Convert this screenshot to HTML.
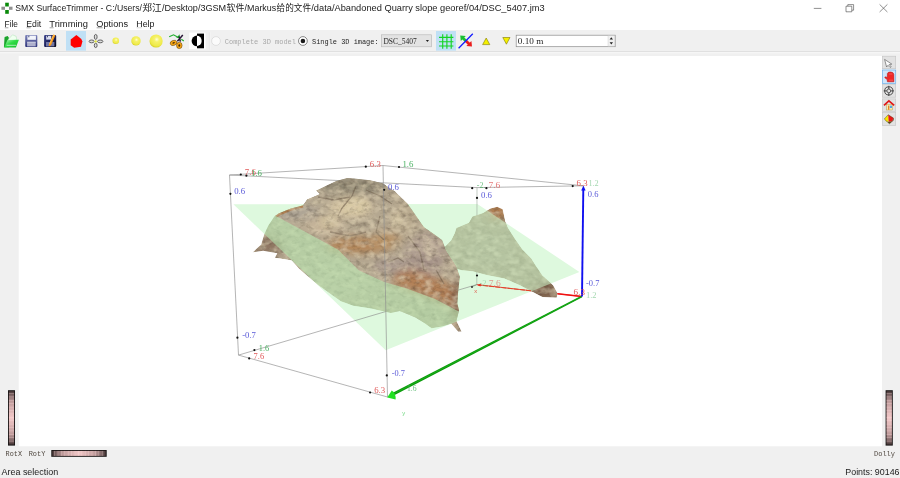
<!DOCTYPE html>
<html><head><meta charset="utf-8"><title>SMX SurfaceTrimmer</title>
<style>
html,body{margin:0;padding:0;background:#f0f0f0;}
body{width:900px;height:478px;overflow:hidden;position:relative;}
svg{position:absolute;left:0;top:0;display:block;will-change:transform}
text{white-space:pre}
.s{font-family:"Liberation Sans","Noto Sans CJK SC",sans-serif}
.m{font-family:"Liberation Mono","Noto Sans CJK SC",monospace}
.d{font-family:"Liberation Serif",serif}
</style></head><body>
<svg width="900" height="478" viewBox="0 0 900 478">
<defs>
<filter id="rk" x="0" y="0" width="100%" height="100%">
 <feTurbulence type="fractalNoise" baseFrequency="0.16 0.22" numOctaves="3" seed="7" result="n"/>
 <feColorMatrix in="n" type="matrix" values="0 0 0 0 0  0 0 0 0 0  0 0 0 0 0  1.2 0 0 0 -0.56" result="a"/>
 <feFlood flood-color="#4a3828" result="c"/>
 <feComposite in="c" in2="a" operator="in" result="d"/>
 <feTurbulence type="fractalNoise" baseFrequency="0.12 0.17" numOctaves="2" seed="23" result="n2"/>
 <feColorMatrix in="n2" type="matrix" values="0 0 0 0 0  0 0 0 0 0  0 0 0 0 0  0 1.3 0 0 -0.56" result="a2"/>
 <feFlood flood-color="#e4d6b8" result="c2"/>
 <feComposite in="c2" in2="a2" operator="in" result="l"/>
 <feMerge result="m"><feMergeNode in="SourceGraphic"/><feMergeNode in="l"/><feMergeNode in="d"/></feMerge>
 <feComposite in="m" in2="SourceGraphic" operator="in"/>
</filter>
<filter id="b2"><feGaussianBlur stdDeviation="4"/></filter>
<filter id="b0"><feGaussianBlur stdDeviation="0.7"/></filter>
<filter id="b1"><feGaussianBlur stdDeviation="2"/></filter>
<clipPath id="cr1"><polygon points="347.1,178.0 354.2,178.5 370.2,180.3 382.7,183.3 395.1,191.3 407.6,203.8 416.4,216.2 424.0,227.0 434.0,234.0 442.2,240.0 446.0,250.0 451.1,257.8 456.4,266.0 460.0,276.7 458.2,290.9 457.3,303.3 459.1,310.4 456.4,321.1 461.8,331.8 458.2,331.8 451.1,323.8 442.2,326.4 431.6,328.2 424.4,322.9 415.6,317.6 403.0,312.2 399.6,311.1 390.7,312.9 371.1,308.4 353.3,305.8 340.9,301.3 317.8,284.4 298.7,268.4 291.6,260.4 274.7,257.8 277.3,253.3 263.1,250.7 252.4,252.4 261.3,244.4 264.0,234.7 268.0,226.0 274.2,216.6 278.7,213.6 290.2,208.8 302.7,205.6 307.1,199.3 319.6,194.0 316.0,190.4 325.8,186.0 336.4,181.0"/></clipPath>
<clipPath id="cr2"><polygon points="497.3,206.7 502.7,209.3 505.3,220.9 508.0,228.0 515.0,239.0 522.2,249.3 531.1,258.2 536.0,266.0 542.4,275.6 551.3,283.6 553.1,285.3 557.6,293.3 556.7,297.8 542.4,296.9 531.8,291.6 520.4,285.6 504.4,278.4 486.7,274.9 472.4,271.3 462.0,270.3 455.0,268.5 449.0,258.0 443.0,249.0 444.9,246.7 451.1,240.4 454.7,233.3 456.4,228.0 468.9,222.7 472.4,216.4 483.1,212.9 490.2,208.4"/></clipPath>
<clipPath id="cfront"><polygon points="270.0,216.5 275.0,215.5 300.0,229.0 338.2,249.8 358.7,270.2 383.6,281.8 406.7,288.5 435.0,299.0 458.2,311.3 470.0,313.0 470.0,170.0 270.0,170.0"/></clipPath>
<clipPath id="cplane"><polygon points="233.4,204.2 477.4,204.0 579.4,272.0 385.7,350.3"/></clipPath>
<linearGradient id="wv" x1="0" y1="0" x2="0" y2="1"><stop offset="0" stop-color="#3a2c2c"/><stop offset="0.05" stop-color="#6e5858"/><stop offset="0.2" stop-color="#c09c9c"/><stop offset="0.5" stop-color="#f2c8c8"/><stop offset="0.8" stop-color="#c09c9c"/><stop offset="0.95" stop-color="#6e5858"/><stop offset="1" stop-color="#3a2c2c"/></linearGradient>
<linearGradient id="wh" x1="0" y1="0" x2="1" y2="0"><stop offset="0" stop-color="#3a2c2c"/><stop offset="0.05" stop-color="#6e5858"/><stop offset="0.2" stop-color="#c09c9c"/><stop offset="0.5" stop-color="#f2c8c8"/><stop offset="0.8" stop-color="#c09c9c"/><stop offset="0.95" stop-color="#6e5858"/><stop offset="1" stop-color="#3a2c2c"/></linearGradient>
<linearGradient id="fg" x1="0" y1="0" x2="1" y2="1"><stop offset="0" stop-color="#b4f8bc"/><stop offset="0.45" stop-color="#30dc46"/><stop offset="1" stop-color="#12b828"/></linearGradient>
<linearGradient id="sg1" x1="0" y1="0" x2="0" y2="1"><stop offset="0" stop-color="#8086bc"/><stop offset="1" stop-color="#2a3078"/></linearGradient>
<linearGradient id="sg2" x1="0" y1="0" x2="1" y2="1"><stop offset="0" stop-color="#3c448c"/><stop offset="0.6" stop-color="#161a50"/><stop offset="1" stop-color="#04040c"/></linearGradient>
<radialGradient id="ys" cx="0.55" cy="0.38" r="0.62"><stop offset="0" stop-color="#ffffd8"/><stop offset="0.3" stop-color="#f6f26a"/><stop offset="0.8" stop-color="#eeea48"/><stop offset="1" stop-color="#d6d024"/></radialGradient>
</defs>

<rect x="0" y="0" width="900" height="30" fill="#ffffff"/>
<rect x="0" y="30" width="900" height="448" fill="#f0f0f0"/>
<rect x="0" y="51" width="900" height="1.2" fill="#e0e0e0"/>
<rect x="0" y="52.2" width="900" height="1" fill="#f8f8f8"/>
<rect x="18.7" y="56" width="863.3" height="390.3" fill="#ffffff"/>
<g class="s">
<rect x="5.2" y="2.7" width="3.6" height="3.8" fill="#0a8a0a"/><rect x="5.2" y="10" width="3.6" height="3.8" fill="#0a8a0a"/>
<rect x="1.4" y="6.7" width="3.6" height="3.1" fill="#909090"/><rect x="9" y="6.7" width="3.5" height="3.1" fill="#909090"/>
<text y="11.1" font-size="8.7" fill="#1a1a1a"><tspan x="15.2" textLength="126.8" lengthAdjust="spacingAndGlyphs">SMX SurfaceTrimmer - C:/Users/</tspan><tspan x="142.3" textLength="19.5" lengthAdjust="spacingAndGlyphs">郑江</tspan><tspan x="162" textLength="64.2" lengthAdjust="spacingAndGlyphs">/Desktop/3GSM</tspan><tspan x="226.6" textLength="17.8" lengthAdjust="spacingAndGlyphs">软件</tspan><tspan x="244.6" textLength="31.6" lengthAdjust="spacingAndGlyphs">/Markus</tspan><tspan x="276.5" textLength="34.5" lengthAdjust="spacingAndGlyphs">给的文件</tspan><tspan x="311.3" textLength="233.3" lengthAdjust="spacingAndGlyphs">/data/Abandoned Quarry slope georef/04/DSC_5407.jm3</tspan></text>
<path d="M813.8 8.4h7.6" stroke="#444" stroke-width="0.6" fill="none"/>
<path d="M846 6.2h5.8v5.6h-5.8z M847.8 6.2v-1.6h5.8v5.6h-1.8" stroke="#444" stroke-width="0.6" fill="none"/>
<path d="M879.6 4.4l7.8 7.6M887.4 4.4l-7.8 7.6" stroke="#444" stroke-width="0.6" fill="none"/>
<text x="4.6" y="26.9" font-size="9.6" fill="#1a1a1a" textLength="13.4" lengthAdjust="spacingAndGlyphs">File</text>
<text x="26.3" y="26.9" font-size="9.6" fill="#1a1a1a" textLength="15" lengthAdjust="spacingAndGlyphs">Edit</text>
<text x="49.3" y="26.9" font-size="9.6" fill="#1a1a1a" textLength="38.7" lengthAdjust="spacingAndGlyphs">Trimming</text>
<text x="96.3" y="26.9" font-size="9.6" fill="#1a1a1a" textLength="31.7" lengthAdjust="spacingAndGlyphs">Options</text>
<text x="136.3" y="26.9" font-size="9.6" fill="#1a1a1a" textLength="18.2" lengthAdjust="spacingAndGlyphs">Help</text>
<rect x="4.8" y="27.6" width="3.6" height="0.55" fill="#333" opacity="0.8"/>
<rect x="26.5" y="27.6" width="4.2" height="0.55" fill="#333" opacity="0.8"/>
<rect x="49.6" y="27.6" width="4" height="0.55" fill="#333" opacity="0.8"/>
<rect x="96.6" y="27.6" width="6" height="0.55" fill="#333" opacity="0.8"/>
<rect x="136.6" y="27.6" width="5.2" height="0.55" fill="#333" opacity="0.35"/>
<text x="1.5" y="474.8" font-size="9.3" fill="#1a1a1a" textLength="56.7" lengthAdjust="spacingAndGlyphs">Area selection</text>
<text x="845.3" y="474.8" font-size="9.3" fill="#1a1a1a" textLength="54.2" lengthAdjust="spacingAndGlyphs">Points: 90146</text>
</g>
<g>
<path d="M3.9 47.2 L4.6 36.9 L7.6 36 L8.8 37.6 L8.8 47.2 Z" fill="#1aa42c"/>
<path d="M8.2 39.4 L12.6 34.8 L16.2 36.4 L16.8 40 L8.2 41.6 Z" fill="#f0fff0" stroke="#9cdca4" stroke-width="0.4"/>
<path d="M4.1 47.4 L7.5 39.9 L18.9 39.7 L15.9 47.4 Z" fill="url(#fg)"/>
<path d="M6.6 45.3 L16.2 45.3" stroke="#eafff0" stroke-width="0.8" opacity="0.85"/>
<rect x="25.2" y="35" width="12.1" height="12.1" rx="1" fill="url(#sg1)"/>
<rect x="27.4" y="35.7" width="8.5" height="4.1" fill="#f2f4fb"/><rect x="28.4" y="35.7" width="0.9" height="1.6" fill="#30386a"/><rect x="27.1" y="41.8" width="8.6" height="4.6" fill="#aeb0cc"/><rect x="27.1" y="41.8" width="8.6" height="0.8" fill="#d0d2e4"/>
<rect x="44.1" y="35" width="12.1" height="12.1" rx="1" fill="url(#sg2)"/>
<rect x="46.2" y="35.8" width="5" height="3.8" fill="#dcdff2"/><rect x="47" y="35.8" width="0.8" height="1.5" fill="#20264a"/><rect x="46" y="42" width="8.4" height="4.4" fill="#7076a6"/>
<path d="M48.9 44.6 L53.2 34.4 L55.4 35.3 L50.9 45.4 L48.7 46.2 Z" fill="#f79a1c"/><path d="M49.6 44 L53.6 34.8" stroke="#ffd070" stroke-width="0.7"/>
<rect x="66" y="31" width="20" height="19.7" fill="#c0e0f5"/>
<path d="M76.4 35 L81.3 38.9 L82.4 41.4 L81 46.7 L74.2 47.8 L70.7 45.3 L70.7 39.6 Z" fill="#ff0000"/>
<g fill="#dcdcdc" stroke="#5c5c5c" stroke-width="0.95"><ellipse cx="95.7" cy="36.9" rx="1.4" ry="2.5"/><ellipse cx="95.7" cy="45.4" rx="1.4" ry="2.2"/><ellipse cx="91.6" cy="41.4" rx="2.5" ry="1.4"/><ellipse cx="100.2" cy="41.4" rx="2.7" ry="1.4"/></g><circle cx="95.7" cy="41.4" r="1.2" fill="#dce040"/>
<circle cx="115.8" cy="40.7" r="3.3" fill="url(#ys)"/><circle cx="136" cy="40.9" r="4.7" fill="url(#ys)"/><circle cx="156.1" cy="41" r="6.6" fill="url(#ys)"/>
<path d="M169.2 36.8 L173.5 34.8 L177.6 37" stroke="#22b030" stroke-width="1.2" fill="none"/><path d="M176.2 37.8 L179.8 34.2 L179.6 38.2Z" fill="#22b030"/>
<path d="M181.3 39.2 L183.8 41" stroke="#22b030" stroke-width="1.2"/>
<path d="M182.8 35 L177.4 41.2 M179 36.4 L180.4 41.6" stroke="#2a1838" stroke-width="1.5" fill="none"/>
<g fill="#f6a616" stroke="#5a3808" stroke-width="0.5"><ellipse cx="173.6" cy="42.9" rx="3.5" ry="2.5" transform="rotate(-18 173.6 42.9)"/><ellipse cx="179.3" cy="45.4" rx="2.8" ry="3.2"/></g>
<g fill="#3a2408"><ellipse cx="173.6" cy="42.9" rx="1.3" ry="0.7" transform="rotate(-18 173.6 42.9)"/><ellipse cx="179.3" cy="45.5" rx="0.9" ry="1.3"/></g>
<rect x="189.2" y="32.6" width="16.3" height="16.6" fill="#ffffff"/><rect x="197" y="33.6" width="7" height="14.7" fill="#000"/>
<path d="M197 35.6 A5.4 5.3 0 0 0 197 46.2 Z" fill="#000"/><path d="M197 35.8 A4.7 5.1 0 0 1 197 46 Z" fill="#fff"/>
<rect x="208.9" y="32.5" width="0.8" height="17" fill="#dcdcdc"/><rect x="209.7" y="32.5" width="0.6" height="17" fill="#fafafa"/>
<circle cx="216" cy="41" r="4.4" fill="#fbfbfb" stroke="#d0d0d0" stroke-width="0.6"/>
<circle cx="302.9" cy="41" r="4.4" fill="#ffffff" stroke="#555" stroke-width="0.7"/><circle cx="302.9" cy="41" r="2.3" fill="#1a1a1a"/>
<g class="m" font-size="8">
<text x="224.8" y="43.8" fill="#a8a8a8" textLength="71.2" lengthAdjust="spacingAndGlyphs">Complete 3D model</text>
<text x="312" y="43.8" fill="#262626" textLength="66.6" lengthAdjust="spacingAndGlyphs">Single 3D image:</text>
<rect x="381.4" y="34.8" width="50.2" height="12" fill="#e3e3e3" stroke="#b4b4b4" stroke-width="0.6"/>
<text class="d" x="383.4" y="43.8" font-size="8.4" fill="#262626" textLength="33.3" lengthAdjust="spacingAndGlyphs">DSC_5407</text>
<path d="M425.8 40 h3.2 l-1.6 2 z" fill="#222"/>
<rect x="516.2" y="35.2" width="99" height="11.5" fill="#ffffff" stroke="#8a8a8a" stroke-width="0.7"/>
<text class="d" x="517.8" y="43.9" font-size="8.4" fill="#262626" textLength="25.5" lengthAdjust="spacingAndGlyphs">0.10 m</text>
<rect x="608" y="35.8" width="6.6" height="10.3" fill="#f0f0f0" stroke="#c8c8c8" stroke-width="0.4"/>
<path d="M609.6 39.4 h3.4 l-1.7 -2.2z M609.6 42.2 h3.4 l-1.7 2.2z" fill="#222"/>
</g>
<rect x="436" y="31" width="20" height="19.7" fill="#c0e0f5"/>
<path d="M442.7 34.3V48.7M446.9 34.3V48.7M451.2 34.3V48.7M439 37.4H453.4M439 41.7H453.4M439 46H453.4" stroke="#14d424" stroke-width="1.15" fill="none"/>
<path d="M466.2 41.2 L462.6 37.8" stroke="#18c030" stroke-width="2.8"/><path d="M460.2 35.4 l5.6 0.6 l-5 5z" fill="#18c030"/>
<path d="M465.8 40.8 L469.4 44.2" stroke="#ea1c1c" stroke-width="2.8"/><path d="M472 46.6 l-5.6 -0.6 l5 -5z" fill="#ea1c1c"/>
<path d="M458.6 48.2 L472.8 33.8" stroke="#1018ff" stroke-width="1.25"/>
<path d="M486.2 38 L489.8 44.6 L482.6 44.6 Z" fill="#f4f000" stroke="#807800" stroke-width="0.6"/>
<path d="M506.4 44.2 L510 37.5 L502.8 37.5 Z" fill="#f4f000" stroke="#807800" stroke-width="0.6"/>
</g>
<rect x="8" y="390.2" width="7" height="55.4" fill="#181414"/>
<rect x="8.9" y="391.0" width="5.2" height="53.8" fill="url(#wv)"/>
<rect x="8.9" y="393.2" width="5.2" height="0.6" fill="#ffe0e0" opacity="0.45"/>
<rect x="8.9" y="396.6" width="5.2" height="0.6" fill="#ffe0e0" opacity="0.45"/>
<rect x="8.9" y="400.0" width="5.2" height="0.6" fill="#ffe0e0" opacity="0.45"/>
<rect x="8.9" y="403.4" width="5.2" height="0.6" fill="#ffe0e0" opacity="0.45"/>
<rect x="8.9" y="406.8" width="5.2" height="0.6" fill="#ffe0e0" opacity="0.45"/>
<rect x="8.9" y="410.2" width="5.2" height="0.6" fill="#ffe0e0" opacity="0.45"/>
<rect x="8.9" y="413.6" width="5.2" height="0.6" fill="#ffe0e0" opacity="0.45"/>
<rect x="8.9" y="417.0" width="5.2" height="0.6" fill="#ffe0e0" opacity="0.45"/>
<rect x="8.9" y="420.4" width="5.2" height="0.6" fill="#ffe0e0" opacity="0.45"/>
<rect x="8.9" y="423.8" width="5.2" height="0.6" fill="#ffe0e0" opacity="0.45"/>
<rect x="8.9" y="427.2" width="5.2" height="0.6" fill="#ffe0e0" opacity="0.45"/>
<rect x="8.9" y="430.6" width="5.2" height="0.6" fill="#ffe0e0" opacity="0.45"/>
<rect x="8.9" y="434.0" width="5.2" height="0.6" fill="#ffe0e0" opacity="0.45"/>
<rect x="8.9" y="437.4" width="5.2" height="0.6" fill="#ffe0e0" opacity="0.45"/>
<rect x="8.9" y="440.8" width="5.2" height="0.6" fill="#ffe0e0" opacity="0.45"/>
<rect x="885.6" y="390.2" width="7.2" height="55.4" fill="#181414"/>
<rect x="886.5" y="391.0" width="5.4" height="53.8" fill="url(#wv)"/>
<rect x="886.5" y="393.2" width="5.4" height="0.6" fill="#ffe0e0" opacity="0.45"/>
<rect x="886.5" y="396.6" width="5.4" height="0.6" fill="#ffe0e0" opacity="0.45"/>
<rect x="886.5" y="400.0" width="5.4" height="0.6" fill="#ffe0e0" opacity="0.45"/>
<rect x="886.5" y="403.4" width="5.4" height="0.6" fill="#ffe0e0" opacity="0.45"/>
<rect x="886.5" y="406.8" width="5.4" height="0.6" fill="#ffe0e0" opacity="0.45"/>
<rect x="886.5" y="410.2" width="5.4" height="0.6" fill="#ffe0e0" opacity="0.45"/>
<rect x="886.5" y="413.6" width="5.4" height="0.6" fill="#ffe0e0" opacity="0.45"/>
<rect x="886.5" y="417.0" width="5.4" height="0.6" fill="#ffe0e0" opacity="0.45"/>
<rect x="886.5" y="420.4" width="5.4" height="0.6" fill="#ffe0e0" opacity="0.45"/>
<rect x="886.5" y="423.8" width="5.4" height="0.6" fill="#ffe0e0" opacity="0.45"/>
<rect x="886.5" y="427.2" width="5.4" height="0.6" fill="#ffe0e0" opacity="0.45"/>
<rect x="886.5" y="430.6" width="5.4" height="0.6" fill="#ffe0e0" opacity="0.45"/>
<rect x="886.5" y="434.0" width="5.4" height="0.6" fill="#ffe0e0" opacity="0.45"/>
<rect x="886.5" y="437.4" width="5.4" height="0.6" fill="#ffe0e0" opacity="0.45"/>
<rect x="886.5" y="440.8" width="5.4" height="0.6" fill="#ffe0e0" opacity="0.45"/>
<rect x="51.3" y="450" width="55.4" height="6.8" fill="#181414"/>
<rect x="52.099999999999994" y="450.9" width="53.8" height="5.0" fill="url(#wh)"/>
<rect x="54.3" y="450.9" width="0.6" height="5.0" fill="#ffe0e0" opacity="0.45"/>
<rect x="57.7" y="450.9" width="0.6" height="5.0" fill="#ffe0e0" opacity="0.45"/>
<rect x="61.1" y="450.9" width="0.6" height="5.0" fill="#ffe0e0" opacity="0.45"/>
<rect x="64.5" y="450.9" width="0.6" height="5.0" fill="#ffe0e0" opacity="0.45"/>
<rect x="67.9" y="450.9" width="0.6" height="5.0" fill="#ffe0e0" opacity="0.45"/>
<rect x="71.3" y="450.9" width="0.6" height="5.0" fill="#ffe0e0" opacity="0.45"/>
<rect x="74.7" y="450.9" width="0.6" height="5.0" fill="#ffe0e0" opacity="0.45"/>
<rect x="78.1" y="450.9" width="0.6" height="5.0" fill="#ffe0e0" opacity="0.45"/>
<rect x="81.5" y="450.9" width="0.6" height="5.0" fill="#ffe0e0" opacity="0.45"/>
<rect x="84.9" y="450.9" width="0.6" height="5.0" fill="#ffe0e0" opacity="0.45"/>
<rect x="88.3" y="450.9" width="0.6" height="5.0" fill="#ffe0e0" opacity="0.45"/>
<rect x="91.7" y="450.9" width="0.6" height="5.0" fill="#ffe0e0" opacity="0.45"/>
<rect x="95.1" y="450.9" width="0.6" height="5.0" fill="#ffe0e0" opacity="0.45"/>
<rect x="98.5" y="450.9" width="0.6" height="5.0" fill="#ffe0e0" opacity="0.45"/>
<rect x="101.9" y="450.9" width="0.6" height="5.0" fill="#ffe0e0" opacity="0.45"/>
<g class="m" font-size="7.2" fill="#504840">
<text x="5.6" y="456.2" textLength="16.4" lengthAdjust="spacingAndGlyphs">RotX</text>
<text x="28.7" y="456.2" textLength="16.6" lengthAdjust="spacingAndGlyphs">RotY</text>
<text x="874" y="456.2" textLength="21" lengthAdjust="spacingAndGlyphs">Dolly</text>
</g>
<rect x="882.5" y="56.2" width="13.2" height="12.5" fill="#e2e2e2" stroke="#c4c4c4" stroke-width="0.6"/>
<rect x="882.5" y="70" width="13.2" height="13.5" fill="#cfe6fa" stroke="#6cb0ea" stroke-width="0.7"/>
<rect x="882.5" y="84.6" width="13.2" height="12.6" fill="#e2e2e2" stroke="#c4c4c4" stroke-width="0.6"/>
<rect x="882.5" y="98.9" width="13.2" height="12.5" fill="#e2e2e2" stroke="#c4c4c4" stroke-width="0.6"/>
<rect x="882.5" y="112.6" width="13.2" height="13.0" fill="#e2e2e2" stroke="#c4c4c4" stroke-width="0.6"/>
<path d="M884.6 59.4 L891.8 64.1 L889.2 64.6 L891.2 66.8 L890 67.4 L888 65.3 L886.6 67 Z" fill="#fcfcfc" stroke="#505050" stroke-width="0.6" stroke-linejoin="round"/>
<path d="M887.4 81.8 L887.2 79.6 L884.8 77.8 L885.2 76.8 L887.3 77.4 L887.4 73.4 Q888 71.8 890.6 72 Q893.6 72.2 893.8 74.4 L893.9 81.8 Z" fill="#f02828" stroke="#b00808" stroke-width="0.5" stroke-linejoin="round"/><path d="M889 74 L892.4 74 M888.8 80.2 L893 80.2" stroke="#ff8080" stroke-width="0.5"/>
<circle cx="888.8" cy="90.9" r="4.1" fill="none" stroke="#2a2a2a" stroke-width="0.8"/><circle cx="888.8" cy="90.9" r="1.9" fill="none" stroke="#2a2a2a" stroke-width="0.7"/><path d="M888.8 85.8v3.2M888.8 92.8v3.2M883.7 90.9h3.2M890.7 90.9h3.2" stroke="#2a2a2a" stroke-width="0.8"/>
<rect x="886.6" y="104.4" width="6" height="5.6" fill="#f8ecb0" stroke="#b09030" stroke-width="0.4"/><rect x="888.1" y="105.6" width="1.2" height="4.2" fill="#e87818"/><rect x="889.8" y="105.6" width="2.2" height="2.4" fill="#50a8e8"/>
<path d="M884 105.3 L888.9 100.9 L894.2 105.3" fill="none" stroke="#e01818" stroke-width="1.7" stroke-linejoin="miter"/>
<path d="M884.3 119 L886.5 121.5 L888.7 121.6 L892.2 121.2 L893.5 118.1 L893.3 120.4 L889.4 123.8 Z" fill="#5a4a10"/>
<path d="M884.3 119 L888.2 114.7 L888.7 121.6 L886.5 121.5 Z" fill="#f8e800"/><path d="M888.2 114.7 L893.5 118.1 L892.2 121.2 L888.7 121.6 Z" fill="#e81818"/>
<path d="M884.3 119 L888.2 114.7 L893.5 118.1 L893.3 120.4 L889.4 123.8 Z" fill="none" stroke="#40300c" stroke-width="0.4"/>
<g id="scene">
<polygon points="233.4,204.2 477.4,204.0 579.4,272.0 385.7,350.3" fill="#def9de"/>
<line x1="238.5" y1="355.1" x2="476.8" y2="284.6" stroke="#8c8c8c" stroke-width="0.65" />
<line x1="476.8" y1="284.6" x2="477" y2="187.6" stroke="#9aa89a" stroke-width="0.6" />
<line x1="477" y1="187.6" x2="229.5" y2="175" stroke="#8c8c8c" stroke-width="0.65" />
<line x1="583.4" y1="185.8" x2="477" y2="187.6" stroke="#8c8c8c" stroke-width="0.65" />
<line x1="581.8" y1="296.5" x2="476.8" y2="284.6" stroke="#e02020" stroke-width="0.8" />
<g clip-path="url(#cr2)"><g filter="url(#rk)">
<polygon points="497.3,206.7 502.7,209.3 505.3,220.9 508.0,228.0 515.0,239.0 522.2,249.3 531.1,258.2 536.0,266.0 542.4,275.6 551.3,283.6 553.1,285.3 557.6,293.3 556.7,297.8 542.4,296.9 531.8,291.6 520.4,285.6 504.4,278.4 486.7,274.9 472.4,271.3 462.0,270.3 455.0,268.5 449.0,258.0 443.0,249.0 444.9,246.7 451.1,240.4 454.7,233.3 456.4,228.0 468.9,222.7 472.4,216.4 483.1,212.9 490.2,208.4" fill="#9a8a70"/>
<g filter="url(#b2)">
<ellipse cx="497" cy="212" rx="9" ry="7" fill="#b87c48"/>
<ellipse cx="545" cy="291" rx="14" ry="8" fill="#7a5c46"/>
<ellipse cx="490" cy="250" rx="26" ry="18" fill="#9c8e74"/>
</g></g></g>
<g clip-path="url(#cr1)"><g filter="url(#rk)">
<polygon points="347.1,178.0 354.2,178.5 370.2,180.3 382.7,183.3 395.1,191.3 407.6,203.8 416.4,216.2 424.0,227.0 434.0,234.0 442.2,240.0 446.0,250.0 451.1,257.8 456.4,266.0 460.0,276.7 458.2,290.9 457.3,303.3 459.1,310.4 456.4,321.1 461.8,331.8 458.2,331.8 451.1,323.8 442.2,326.4 431.6,328.2 424.4,322.9 415.6,317.6 403.0,312.2 399.6,311.1 390.7,312.9 371.1,308.4 353.3,305.8 340.9,301.3 317.8,284.4 298.7,268.4 291.6,260.4 274.7,257.8 277.3,253.3 263.1,250.7 252.4,252.4 261.3,244.4 264.0,234.7 268.0,226.0 274.2,216.6 278.7,213.6 290.2,208.8 302.7,205.6 307.1,199.3 319.6,194.0 316.0,190.4 325.8,186.0 336.4,181.0" fill="#b4a790"/>
<g filter="url(#b2)">
<ellipse cx="352" cy="186" rx="32" ry="8" fill="#8e8672"/>
<ellipse cx="298" cy="213" rx="22" ry="7" fill="#aea596"/>
<ellipse cx="350" cy="208" rx="22" ry="10" fill="#d5c5a3"/>
<ellipse cx="324" cy="226" rx="20" ry="8" fill="#c7b59a"/>
<ellipse cx="360" cy="245" rx="34" ry="8" fill="#b28456"/>
<ellipse cx="405" cy="220" rx="13" ry="20" fill="#b9aa90"/>
<ellipse cx="425" cy="256" rx="20" ry="22" fill="#a7958a"/>
<path d="M398 268 L420 272 L446 282 L460 296 L458 312 L436 300 L410 290 L392 284 Z" fill="#b28056"/>
<path d="M452 286 L461 280 L460 312 L463 333 L452 322 Z" fill="#826049"/>
<ellipse cx="386" cy="240" rx="14" ry="8" fill="#ba956b"/>
<ellipse cx="392" cy="266" rx="18" ry="7" fill="#a7978e"/>
<ellipse cx="268" cy="246" rx="16" ry="10" fill="#8e7662"/>
<ellipse cx="330" cy="280" rx="40" ry="18" fill="#b9ae96"/>
<ellipse cx="420" cy="315" rx="30" ry="10" fill="#b0a58c"/>
</g>
<g filter="url(#b1)" opacity="0.8">
<path d="M348 200 L362 196 L372 206 L360 214 L344 212 Z" fill="#d9caa5"/>
<path d="M318 218 L334 214 L340 224 L324 230 Z" fill="#cfbf9d"/>
<path d="M390 214 L400 212 L404 224 L392 228 Z" fill="#d1c3a3"/>
<path d="M418 240 L432 238 L440 252 L428 258 Z" fill="#c7b8a1"/>
</g>
<path d="M275.5 216.5 L279 214 L290.5 209.4 L303 206" fill="none" stroke="#b07a44" stroke-width="3" opacity="0.8" filter="url(#b0)"/>
<g fill="none" stroke="#6a5a48" stroke-width="1.3" opacity="0.5" filter="url(#b0)">
<path d="M356 186 L352 196 L342 208 L338 216"/><path d="M318 197 L334 200 L350 197"/><path d="M366 190 L380 196 L392 204"/><path d="M380 216 L376 232 L384 240"/><path d="M330 232 L350 236 L366 232"/><path d="M408 236 L420 252 L424 270"/><path d="M388 262 L398 258 L404 262"/><path d="M436 270 L444 284"/>
</g></g></g>
<g clip-path="url(#cplane)"><polygon points="497.3,206.7 502.7,209.3 505.3,220.9 508.0,228.0 515.0,239.0 522.2,249.3 531.1,258.2 536.0,266.0 542.4,275.6 551.3,283.6 553.1,285.3 557.6,293.3 556.7,297.8 542.4,296.9 531.8,291.6 520.4,285.6 504.4,278.4 486.7,274.9 472.4,271.3 462.0,270.3 455.0,268.5 449.0,258.0 443.0,249.0 444.9,246.7 451.1,240.4 454.7,233.3 456.4,228.0 468.9,222.7 472.4,216.4 483.1,212.9 490.2,208.4" fill="#c6e8be" fill-opacity="0.6"/><polygon points="347.1,178.0 354.2,178.5 370.2,180.3 382.7,183.3 395.1,191.3 407.6,203.8 416.4,216.2 424.0,227.0 434.0,234.0 442.2,240.0 446.0,250.0 451.1,257.8 456.4,266.0 460.0,276.7 458.2,290.9 457.3,303.3 459.1,310.4 456.4,321.1 461.8,331.8 458.2,331.8 451.1,323.8 442.2,326.4 431.6,328.2 424.4,322.9 415.6,317.6 403.0,312.2 399.6,311.1 390.7,312.9 371.1,308.4 353.3,305.8 340.9,301.3 317.8,284.4 298.7,268.4 291.6,260.4 274.7,257.8 277.3,253.3 263.1,250.7 252.4,252.4 261.3,244.4 264.0,234.7 268.0,226.0 274.2,216.6 278.7,213.6 290.2,208.8 302.7,205.6 307.1,199.3 319.6,194.0 316.0,190.4 325.8,186.0 336.4,181.0" fill="#b8e6b0" fill-opacity="0.6"/></g>
<g clip-path="url(#cfront)">
<g clip-path="url(#cr1)"><g filter="url(#rk)">
<polygon points="347.1,178.0 354.2,178.5 370.2,180.3 382.7,183.3 395.1,191.3 407.6,203.8 416.4,216.2 424.0,227.0 434.0,234.0 442.2,240.0 446.0,250.0 451.1,257.8 456.4,266.0 460.0,276.7 458.2,290.9 457.3,303.3 459.1,310.4 456.4,321.1 461.8,331.8 458.2,331.8 451.1,323.8 442.2,326.4 431.6,328.2 424.4,322.9 415.6,317.6 403.0,312.2 399.6,311.1 390.7,312.9 371.1,308.4 353.3,305.8 340.9,301.3 317.8,284.4 298.7,268.4 291.6,260.4 274.7,257.8 277.3,253.3 263.1,250.7 252.4,252.4 261.3,244.4 264.0,234.7 268.0,226.0 274.2,216.6 278.7,213.6 290.2,208.8 302.7,205.6 307.1,199.3 319.6,194.0 316.0,190.4 325.8,186.0 336.4,181.0" fill="#b4a790"/>
<g filter="url(#b2)">
<ellipse cx="352" cy="186" rx="32" ry="8" fill="#8e8672"/>
<ellipse cx="298" cy="213" rx="22" ry="7" fill="#aea596"/>
<ellipse cx="350" cy="208" rx="22" ry="10" fill="#d5c5a3"/>
<ellipse cx="324" cy="226" rx="20" ry="8" fill="#c7b59a"/>
<ellipse cx="360" cy="245" rx="34" ry="8" fill="#b28456"/>
<ellipse cx="405" cy="220" rx="13" ry="20" fill="#b9aa90"/>
<ellipse cx="425" cy="256" rx="20" ry="22" fill="#a7958a"/>
<path d="M398 268 L420 272 L446 282 L460 296 L458 312 L436 300 L410 290 L392 284 Z" fill="#b28056"/>
<path d="M452 286 L461 280 L460 312 L463 333 L452 322 Z" fill="#826049"/>
<ellipse cx="386" cy="240" rx="14" ry="8" fill="#ba956b"/>
<ellipse cx="392" cy="266" rx="18" ry="7" fill="#a7978e"/>
<ellipse cx="268" cy="246" rx="16" ry="10" fill="#8e7662"/>
<ellipse cx="330" cy="280" rx="40" ry="18" fill="#b9ae96"/>
<ellipse cx="420" cy="315" rx="30" ry="10" fill="#b0a58c"/>
</g>
<g filter="url(#b1)" opacity="0.8">
<path d="M348 200 L362 196 L372 206 L360 214 L344 212 Z" fill="#d9caa5"/>
<path d="M318 218 L334 214 L340 224 L324 230 Z" fill="#cfbf9d"/>
<path d="M390 214 L400 212 L404 224 L392 228 Z" fill="#d1c3a3"/>
<path d="M418 240 L432 238 L440 252 L428 258 Z" fill="#c7b8a1"/>
</g>
<path d="M275.5 216.5 L279 214 L290.5 209.4 L303 206" fill="none" stroke="#b07a44" stroke-width="3" opacity="0.8" filter="url(#b0)"/>
<g fill="none" stroke="#6a5a48" stroke-width="1.3" opacity="0.5" filter="url(#b0)">
<path d="M356 186 L352 196 L342 208 L338 216"/><path d="M318 197 L334 200 L350 197"/><path d="M366 190 L380 196 L392 204"/><path d="M380 216 L376 232 L384 240"/><path d="M330 232 L350 236 L366 232"/><path d="M408 236 L420 252 L424 270"/><path d="M388 262 L398 258 L404 262"/><path d="M436 270 L444 284"/>
</g></g></g>
</g>
<line x1="581.8" y1="296.5" x2="557.5" y2="293.8" stroke="#f01010" stroke-width="1.6" />
<line x1="531" y1="290.8" x2="478.5" y2="285" stroke="#e44428" stroke-width="1.0" stroke-dasharray="5 1.2"/>
<path d="M477.3 285.2 l3.6 -1.6 l-0.4 3z" fill="#e83020"/>
<line x1="476.8" y1="284.6" x2="471.7" y2="287" stroke="#6a8a6a" stroke-width="0.6" />
<circle cx="472" cy="287" r="0.9" fill="#222"/>
<line x1="229.5" y1="175" x2="383" y2="165.5" stroke="#8c8c8c" stroke-width="0.65" />
<line x1="383" y1="165.5" x2="583.4" y2="185.8" stroke="#8c8c8c" stroke-width="0.65" />
<line x1="229.5" y1="175" x2="238.5" y2="355.1" stroke="#8c8c8c" stroke-width="0.65" />
<line x1="238.5" y1="355.1" x2="387.5" y2="397" stroke="#8c8c8c" stroke-width="0.65" />
<line x1="383" y1="165.5" x2="387.5" y2="397" stroke="#8c8c8c" stroke-width="0.65" />
<polygon points="581.4,295.7 392.3,392.9 393.7,395.5 582.2,297.3" fill="#0a9a0a"/>
<polygon points="581.7,296.2 392.8,393.8 393.2,394.6 581.9,296.8" fill="#1cb01c"/>
<path d="M387.2 397.4 L391.8 390.4 Q396 393 395.6 399.4 Z" fill="#22e022"/>
<line x1="582" y1="296.5" x2="583.3" y2="189.5" stroke="#1010f0" stroke-width="1.9" />
<path d="M583.4 185.6 L581.2 190.4 L585.6 190.4 Z" fill="#1010f0"/>
<circle cx="240.8" cy="174.5" r="1.1" fill="#111"/>
<circle cx="246.4" cy="175.7" r="1.1" fill="#111"/>
<circle cx="230.4" cy="193.8" r="1.1" fill="#111"/>
<circle cx="365.8" cy="166.7" r="1.1" fill="#111"/>
<circle cx="399" cy="167" r="1.1" fill="#111"/>
<circle cx="384.2" cy="189.8" r="1.1" fill="#111"/>
<circle cx="472.2" cy="188.2" r="1.1" fill="#111"/>
<circle cx="486.4" cy="188.2" r="1.1" fill="#111"/>
<circle cx="477" cy="197.9" r="1.1" fill="#111"/>
<circle cx="572.7" cy="186.1" r="1.1" fill="#111"/>
<circle cx="237.4" cy="337.7" r="1.1" fill="#111"/>
<circle cx="254.4" cy="350.1" r="1.1" fill="#111"/>
<circle cx="249.2" cy="358.4" r="1.1" fill="#111"/>
<circle cx="386.8" cy="375.4" r="1.1" fill="#111"/>
<circle cx="370.1" cy="392.5" r="1.1" fill="#111"/>
<circle cx="477" cy="275.5" r="1.1" fill="#111"/>
<g class="d" font-size="7.6">
<text x="244.8" y="174.6" fill="#e05858" textLength="11.0" lengthAdjust="spacingAndGlyphs" opacity="1">7.6</text>
<text x="251" y="176" fill="#48b060" textLength="11.0" lengthAdjust="spacingAndGlyphs" opacity="1">1.6</text>
<text x="234.2" y="194.1" fill="#5858d8" textLength="11.0" lengthAdjust="spacingAndGlyphs" opacity="1">0.6</text>
<text x="369.8" y="166.8" fill="#e05858" textLength="11.0" lengthAdjust="spacingAndGlyphs" opacity="1">6.3</text>
<text x="402.4" y="166.8" fill="#48b060" textLength="11.0" lengthAdjust="spacingAndGlyphs" opacity="1">1.6</text>
<text x="388" y="190" fill="#5858d8" textLength="11.0" lengthAdjust="spacingAndGlyphs" opacity="1">0.6</text>
<text x="476.8" y="188.3" fill="#48b060" textLength="8.6" lengthAdjust="spacingAndGlyphs" opacity="0.8">-2.</text>
<text x="488.4" y="188.3" fill="#e05858" textLength="12.0" lengthAdjust="spacingAndGlyphs" opacity="0.8">7.6</text>
<text x="481" y="198.2" fill="#5858d8" textLength="11.0" lengthAdjust="spacingAndGlyphs" opacity="1">0.6</text>
<text x="576.6" y="186.4" fill="#e05858" textLength="11.0" lengthAdjust="spacingAndGlyphs" opacity="1">6.3</text>
<text x="588.4" y="186" fill="#48b060" textLength="10.4" lengthAdjust="spacingAndGlyphs" opacity="0.5">1.2</text>
<text x="587.8" y="197.3" fill="#5858d8" textLength="10.6" lengthAdjust="spacingAndGlyphs" opacity="1">0.6</text>
<text x="586" y="285.9" fill="#5858d8" textLength="13.4" lengthAdjust="spacingAndGlyphs" opacity="1">-0.7</text>
<text x="573.6" y="295.4" fill="#e05858" textLength="11.4" lengthAdjust="spacingAndGlyphs" opacity="1">6.3</text>
<text x="586" y="298.4" fill="#48b060" textLength="10.6" lengthAdjust="spacingAndGlyphs" opacity="0.5">1.2</text>
<text x="488.8" y="286" fill="#e05858" textLength="12.0" lengthAdjust="spacingAndGlyphs" opacity="0.6">7.6</text>
<text x="479.5" y="285.8" fill="#48b060" textLength="7.0" lengthAdjust="spacingAndGlyphs" opacity="0.4">-2</text>
<text x="242.2" y="338" fill="#5858d8" textLength="13.8" lengthAdjust="spacingAndGlyphs" opacity="1">-0.7</text>
<text x="258.8" y="350.5" fill="#48b060" textLength="10.4" lengthAdjust="spacingAndGlyphs" opacity="1">1.6</text>
<text x="253.6" y="358.8" fill="#e05858" textLength="10.6" lengthAdjust="spacingAndGlyphs" opacity="1">7.6</text>
<text x="391.8" y="375.8" fill="#5858d8" textLength="13.2" lengthAdjust="spacingAndGlyphs" opacity="1">-0.7</text>
<text x="374.2" y="392.8" fill="#e05858" textLength="11.0" lengthAdjust="spacingAndGlyphs" opacity="1">6.3</text>
<text x="406.9" y="390.5" fill="#48b060" textLength="9.6" lengthAdjust="spacingAndGlyphs" opacity="0.8">1.6</text>
</g>
<g class="m" font-size="5.6"><text x="474" y="293.4" fill="#e06050">x</text><text x="402" y="415" fill="#70d880">y</text></g>
</g>
</svg></body></html>
